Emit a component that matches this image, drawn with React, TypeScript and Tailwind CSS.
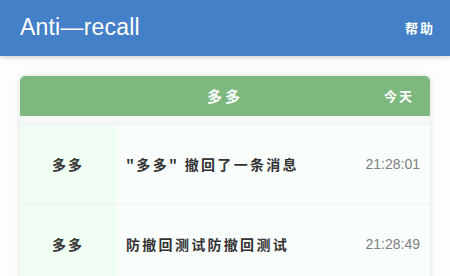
import React from 'react';

const rows = [
  { name: '多多', text: '"多多" 撤回了一条消息', time: '21:28:01' },
  { name: '多多', text: '防撤回测试防撤回测试', time: '21:28:49' },
];

const cjk = { fontFamily: '"Noto Sans CJK SC", sans-serif' };

function App() {
  return (
    <div className="w-[450px] h-[276px] overflow-hidden bg-[#fdfdfd]">
      {/* top bar */}
      <div className="h-14 bg-[#4380c8] flex items-center justify-between pl-5 pr-[15px] shadow-[0_2px_4px_rgba(0,0,0,0.15)]">
        <span className="text-white text-[23px] tracking-[0.2px] font-['Liberation_Sans',sans-serif] pb-0.5">Anti—recall</span>
        <span className="text-white text-[13px] font-bold tracking-[2px]" style={cjk}>帮助</span>
      </div>

      <div className="px-5 pt-5">
        <div className="rounded-t-[5px] overflow-hidden shadow-[0_0_6px_rgba(0,0,0,0.12)]">
          {/* card header */}
          <div className="h-10 bg-[#7db97f] flex items-center justify-end pr-4 relative text-white font-bold" style={cjk}>
            <span className="absolute left-0 right-0 text-center text-[15px] tracking-[3px]">多多</span>
            <span className="relative text-[13px] tracking-[2px]">今天</span>
          </div>
          <div className="h-[9px] bg-[#f4f8f7] border-b border-[#eef3f0]" />
          {rows.map((r, i) => (
            <div key={i} className="flex h-20 border-b border-[#eef2f0]">
              <div className="w-[96px] bg-[#effdf2] flex items-center justify-center text-[14px] font-bold tracking-[2px] text-[#333]" style={cjk}>
                {r.name}
              </div>
              <div className="flex-1 bg-[#f9fdfb] flex items-center justify-between pl-[10px] pr-[10px]">
                <span className="text-[14px] font-bold tracking-[2.3px] text-[#333]" style={cjk}>{r.text}</span>
                <span className="text-[14px] text-[#808080] font-['Liberation_Sans',sans-serif]">{r.time}</span>
              </div>
            </div>
          ))}
        </div>
      </div>
    </div>
  );
}

export default App;
